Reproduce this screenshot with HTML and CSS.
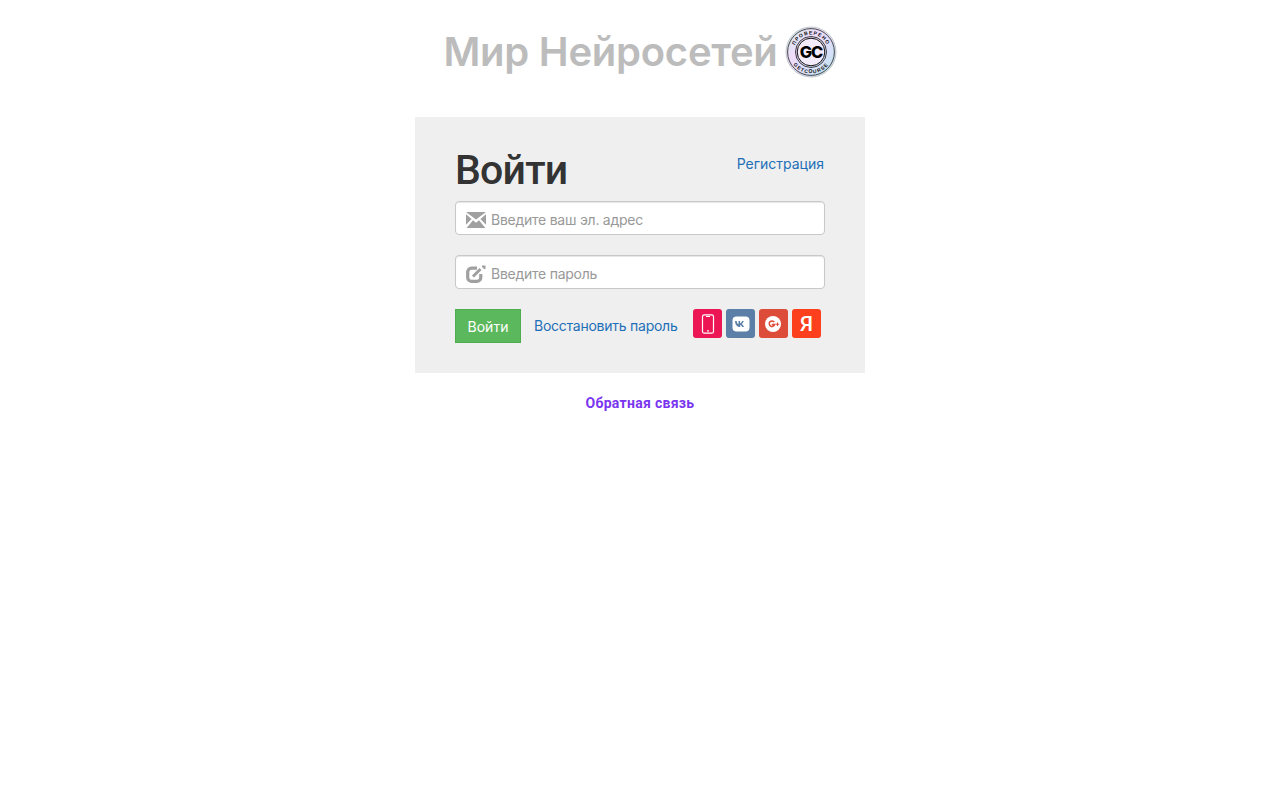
FILE: index.html
```html
<!DOCTYPE html>
<html lang="ru">
	<head>
		<meta charset="utf-8">
		<title>Мир Нейросетей</title>
		<link rel="stylesheet" href="styles.css">
	</head>
	<body>
		<header class="site-head">
			<span class="site-name">Мир Нейросетей</span>
			<svg class="badge" width="52" height="52" viewBox="0 0 52 52">
				<defs>
					<linearGradient id="holo" x1="0" y1="0" x2="1" y2="1">
						<stop offset="0" stop-color="#c9f0e6"/>
						<stop offset="0.35" stop-color="#f0dcfb"/>
						<stop offset="0.7" stop-color="#d5e0f9"/>
						<stop offset="1" stop-color="#b9e6e2"/>
					</linearGradient>
					<path id="arcTop" d="M8.500 26a17.500 17.500 0 0 1 35 0"/>
					<path id="arcBot" d="M4.500 26a21.500 21.500 0 0 0 43 0"/>
				</defs>
				<circle cx="26" cy="26" r="25" fill="url(#holo)" stroke="#c2c8cc" stroke-width="1"/>
				<circle cx="26" cy="26" r="23.400" fill="none" stroke="#222" stroke-width="0.800"/>
				<circle cx="26" cy="26" r="15.500" fill="none" stroke="#111" stroke-width="0.800"/>
				<circle cx="26" cy="26" r="13.800" fill="#f4ecfb" stroke="#111" stroke-width="1"/>
				<text class="badge-small"><textPath href="#arcTop" startOffset="50%" text-anchor="middle">ПРОВЕРЕНО</textPath></text>
				<text class="badge-small"><textPath href="#arcBot" startOffset="50%" text-anchor="middle">GETCOURSE</textPath></text>
				<text class="badge-gc" x="26" y="31.500" text-anchor="middle">GC</text>
			</svg>
		</header>

		<main class="login-box">
			<div class="login-head">
				<h1 class="login-title">Войти</h1>
				<a class="link reg-link" href="#">Регистрация</a>
			</div>
			<label class="field">
				<svg class="field-icon" width="20" height="16" viewBox="0 0 20 16">
					<path fill="#a0a0a0" d="M0 0h20L10 7.500zM0 2.200l5.600 4.800L0 12.800zM20 2.200v10.600l-5.600-5.800zM7 8.300L10 10.800l3-2.500L19.400 16H.6z"/>
				</svg>
				<input class="field-input" type="text" placeholder="Введите ваш эл. адрес">
			</label>
			<label class="field">
				<svg class="field-icon" width="20" height="18" viewBox="0 0 20 18">
					<path fill="none" stroke="#a0a0a0" stroke-width="3.200" d="M11 3.200H5.500A3.800 3.800 0 0 0 1.700 7v5.500a3.800 3.800 0 0 0 3.800 3.800H11a3.800 3.800 0 0 0 3.800-3.800V9"/>
					<path fill="none" stroke="#a0a0a0" stroke-width="3" d="M7 11.500L14.500 4"/>
					<path fill="#a0a0a0" d="M16 0.500l3.500 0 0 3.500-1.500 0-2-2z"/>
				</svg>
				<input class="field-input" type="password" placeholder="Введите пароль">
			</label>
			<div class="actions">
				<button class="btn-login" type="button">Войти</button>
				<a class="link restore-link" href="#">Восстановить пароль</a>
				<div class="socials">
					<a class="social phone" href="#">
						<svg width="14" height="20" viewBox="0 0 14 20"><rect x="1.500" y="0.800" width="11" height="18.400" rx="1.800" fill="none" stroke="#fff" stroke-width="1.200"/><path stroke="#fff" stroke-width="1" d="M5 2.500h4"/><circle cx="7" cy="16.800" r="0.900" fill="#fff"/></svg>
					</a>
					<a class="social vk" href="#">
						<svg width="18" height="16" viewBox="0 0 18 16"><rect width="17" height="15" x="0.500" y="0.500" rx="4" fill="#fff"/><path fill="#5b7fa6" d="M3 5h1.700c.2 1.800 1 3 1.800 3.300V5h1.600v2.300C9 7.100 9.800 6 10.100 5h1.600c-.3 1.300-1.200 2.500-2 3 .9.500 1.800 1.500 2.300 3h-1.800c-.4-1-1.100-1.800-2-2v2H7.800C5 11 3.200 8.600 3 5z"/></svg>
					</a>
					<a class="social gplus" href="#">
						<svg width="18" height="18" viewBox="0 0 18 18"><circle cx="8" cy="9" r="8" fill="#fff"/><path fill="none" stroke="#dd4b39" stroke-width="1.500" d="M9.300 7A2.800 2.800 0 1 0 9.700 9.600H6.800"/><path stroke="#dd4b39" stroke-width="1.100" d="M10.800 9.300h3.400M12.500 7.600v3.400"/></svg>
					</a>
					<a class="social yandex" href="#">Я</a>
				</div>
			</div>
		</main>

		<footer class="site-foot">
			<a class="feedback" href="#">Обратная связь</a>
		</footer>
	</body>
</html>
```
FILE: styles.css
```css
* {
	box-sizing: border-box;
}
body {
	margin: 0;
	background-color: #fff;
	font-family: "Inter", "Noto Sans", sans-serif;
}
a {
	text-decoration: none;
}
.site-head {
	display: flex;
	justify-content: center;
	align-items: center;
	gap: 7px;
	height: 117px;
	padding-bottom: 14px;
}
.site-name {
	font-size: 40px;
	font-weight: 600;
	letter-spacing: -0.250px;
	color: #bcbcbc;
}
.badge-small {
	font-family: "Liberation Sans", sans-serif;
	font-size: 5px;
	font-weight: 700;
	letter-spacing: 1px;
	fill: #111;
}
.badge-gc {
	font-family: "Inter", sans-serif;
	font-size: 16.500px;
	font-weight: 800;
	letter-spacing: -1.200px;
	fill: #000;
}
.login-box {
	width: 450px;
	height: 256px;
	margin: 0 auto;
	padding: 24px 40px 0;
	background-color: #efefef;
}
.login-head {
	display: flex;
	justify-content: space-between;
	align-items: flex-start;
	height: 60px;
}
.login-title {
	margin: 0;
	font-family: "Roboto", sans-serif;
	font-size: 41px;
	line-height: 58px;
	font-weight: 500;
	letter-spacing: -0.800px;
	color: #333;
}
.link {
	font-size: 14px;
	color: #1e6fb8;
}
.reg-link {
	margin-top: 14px;
	margin-right: 1px;
}
.field {
	display: flex;
	align-items: center;
	gap: 5px;
	height: 34px;
	margin-bottom: 20px;
	padding: 2px 0 0 10px;
	background-color: #fff;
	border: 1px solid #c8c8c8;
	border-radius: 4px;
	box-shadow: inset 0 1px 1px rgba(0, 0, 0, 0.1);
}
.field-icon {
	flex: none;
	margin-top: 1px;
}
.field-input {
	flex: 1;
	min-width: 0;
	border: 0;
	outline: 0;
	padding: 0;
	background: none;
	font-family: inherit;
	font-size: 14px;
	letter-spacing: -0.250px;
	color: #333;
}
.field-input::placeholder {
	color: #999;
	opacity: 1;
}
.actions {
	display: flex;
	align-items: flex-start;
}
.btn-login {
	width: 66px;
	height: 34px;
	padding: 0;
	background-color: #5cb85c;
	border: 1px solid #4cae4c;
	font-family: inherit;
	font-size: 14px;
	color: #fff;
}
.restore-link {
	margin: 8px 0 0 13px;
	letter-spacing: -0.250px;
	white-space: nowrap;
}
.socials {
	display: flex;
	gap: 4px;
	margin-left: auto;
	margin-right: 4px;
}
.social {
	display: flex;
	align-items: center;
	justify-content: center;
	width: 29px;
	height: 29px;
	border-radius: 3px;
	color: #fff;
}
.phone {
	background-color: #ec1655;
}
.vk {
	background-color: #5b7fa6;
}
.gplus {
	background-color: #dd4b39;
}
.yandex {
	background-color: #fc3f1d;
	font-family: "Roboto", sans-serif;
	font-size: 21px;
	font-weight: 500;
}
.site-foot {
	margin-top: 19px;
	text-align: center;
}
.feedback {
	font-family: "Roboto", sans-serif;
	font-size: 14px;
	font-weight: 700;
	letter-spacing: 0.300px;
	color: #7a35f0;
}
```
